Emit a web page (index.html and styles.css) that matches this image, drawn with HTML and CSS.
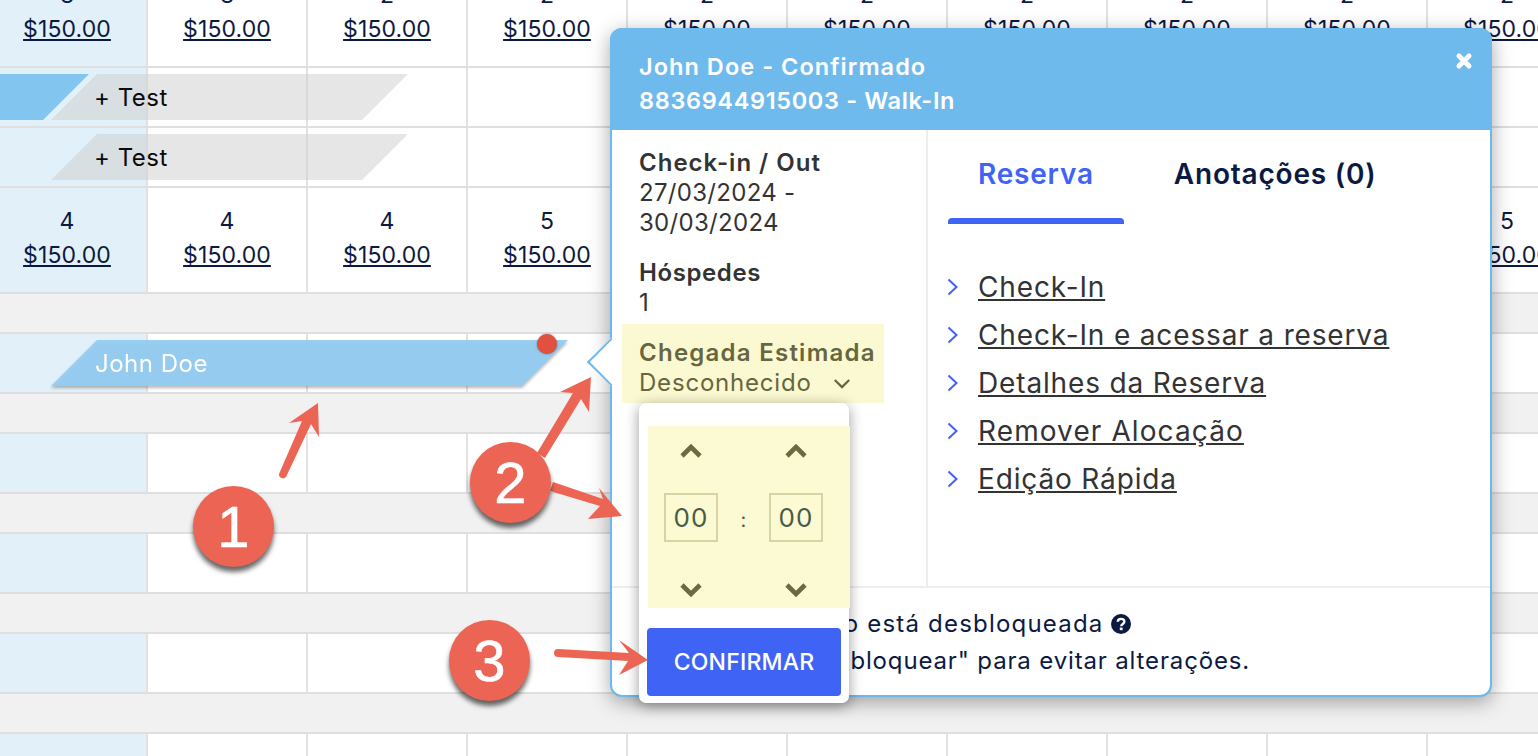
FILE: index.html
```html
<!DOCTYPE html>
<html lang="pt">
<head>
<meta charset="utf-8">
<title>Calendário de reservas</title>
<link rel="stylesheet" href="styles.css">
</head>
<body>
<main class="stage">
  <section class="grid">
    <div class="row row-price">
      <div class="cell"><span class="num">3</span><a class="price">$150.00</a></div>
      <div class="cell"><span class="num">3</span><a class="price">$150.00</a></div>
      <div class="cell"><span class="num">2</span><a class="price">$150.00</a></div>
      <div class="cell"><span class="num">2</span><a class="price">$150.00</a></div>
      <div class="cell"><span class="num">2</span><a class="price">$150.00</a></div>
      <div class="cell"><span class="num">2</span><a class="price">$150.00</a></div>
      <div class="cell"><span class="num">2</span><a class="price">$150.00</a></div>
      <div class="cell"><span class="num">2</span><a class="price">$150.00</a></div>
      <div class="cell"><span class="num">2</span><a class="price">$150.00</a></div>
      <div class="cell"><span class="num">2</span><a class="price">$150.00</a></div>
    </div>
    <div class="row row-slot">
      <div class="cell"></div><div class="cell"></div><div class="cell"></div><div class="cell"></div><div class="cell"></div><div class="cell"></div><div class="cell"></div><div class="cell"></div><div class="cell"></div><div class="cell"></div>
      <div class="bar bar-blue-stub"></div>
      <div class="bar bar-gray"><span>+ Test</span></div>
    </div>
    <div class="row row-slot">
      <div class="cell"></div><div class="cell"></div><div class="cell"></div><div class="cell"></div><div class="cell"></div><div class="cell"></div><div class="cell"></div><div class="cell"></div><div class="cell"></div><div class="cell"></div>
      <div class="bar bar-gray"><span>+ Test</span></div>
    </div>
    <div class="row row-price">
      <div class="cell"><span class="num">4</span><a class="price">$150.00</a></div>
      <div class="cell"><span class="num">4</span><a class="price">$150.00</a></div>
      <div class="cell"><span class="num">4</span><a class="price">$150.00</a></div>
      <div class="cell"><span class="num">5</span><a class="price">$150.00</a></div>
      <div class="cell"><span class="num">5</span><a class="price">$150.00</a></div>
      <div class="cell"><span class="num">5</span><a class="price">$150.00</a></div>
      <div class="cell"><span class="num">5</span><a class="price">$150.00</a></div>
      <div class="cell"><span class="num">5</span><a class="price">$150.00</a></div>
      <div class="cell"><span class="num">5</span><a class="price">$150.00</a></div>
      <div class="cell"><span class="num">5</span><a class="price">$150.00</a></div>
    </div>
    <div class="row-gap"></div>
    <div class="row row-slot">
      <div class="cell"></div><div class="cell"></div><div class="cell"></div><div class="cell"></div><div class="cell"></div><div class="cell"></div><div class="cell"></div><div class="cell"></div><div class="cell"></div><div class="cell"></div>
      <div class="bar-shadow"><div class="bar bar-guest"><span>John Doe</span></div></div>
      <span class="bar-dot"></span>
    </div>
    <div class="row-gap"></div>
    <div class="row row-slot">
      <div class="cell"></div><div class="cell"></div><div class="cell"></div><div class="cell"></div><div class="cell"></div><div class="cell"></div><div class="cell"></div><div class="cell"></div><div class="cell"></div><div class="cell"></div>
    </div>
    <div class="row-gap"></div>
    <div class="row row-slot">
      <div class="cell"></div><div class="cell"></div><div class="cell"></div><div class="cell"></div><div class="cell"></div><div class="cell"></div><div class="cell"></div><div class="cell"></div><div class="cell"></div><div class="cell"></div>
    </div>
    <div class="row-gap"></div>
    <div class="row row-slot">
      <div class="cell"></div><div class="cell"></div><div class="cell"></div><div class="cell"></div><div class="cell"></div><div class="cell"></div><div class="cell"></div><div class="cell"></div><div class="cell"></div><div class="cell"></div>
    </div>
    <div class="row-gap"></div>
    <div class="row row-slot">
      <div class="cell"></div><div class="cell"></div><div class="cell"></div><div class="cell"></div><div class="cell"></div><div class="cell"></div><div class="cell"></div><div class="cell"></div><div class="cell"></div><div class="cell"></div>
    </div>
  </section>

  <aside class="popover">
    <span class="popover-notch"></span>
    <header class="pop-head">
      <div class="pop-title">
        <div class="title-name">John Doe - Confirmado</div>
        <div class="title-code">8836944915003 - Walk-In</div>
      </div>
      <svg class="pop-close" viewBox="0 0 18 18" aria-label="Fechar"><path d="M4 4 L14 14 M14 4 L4 14" fill="none" stroke="#fff" stroke-width="5" stroke-linecap="round"/></svg>
    </header>
    <div class="pop-body">
      <div class="pop-info">
        <div class="info-label">Check-in / Out</div>
        <div class="info-value">27/03/2024 -<br>30/03/2024</div>
        <div class="info-label info-spaced">Hóspedes</div>
        <div class="info-value">1</div>
        <div class="arrival">
          <div class="info-label arrival-label">Chegada Estimada</div>
          <div class="arrival-value">
            <span>Desconhecido</span>
            <svg class="arrival-caret" viewBox="0 0 20 12"><path d="M2 2 L10 10 L18 2" fill="none" stroke="#66663f" stroke-width="2.4"/></svg>
          </div>
        </div>
      </div>
      <div class="pop-actions">
        <nav class="tabs">
          <a class="tab tab-active">Reserva</a>
          <a class="tab">Anotações (0)</a>
        </nav>
        <ul class="links">
          <li><svg class="link-chev" viewBox="0 0 11 18"><path d="M1.5 1.5 L9.5 9 L1.5 16.5" fill="none" stroke="#3f63f5" stroke-width="2"/></svg><a>Check-In</a></li>
          <li><svg class="link-chev" viewBox="0 0 11 18"><path d="M1.5 1.5 L9.5 9 L1.5 16.5" fill="none" stroke="#3f63f5" stroke-width="2"/></svg><a>Check-In e acessar a reserva</a></li>
          <li><svg class="link-chev" viewBox="0 0 11 18"><path d="M1.5 1.5 L9.5 9 L1.5 16.5" fill="none" stroke="#3f63f5" stroke-width="2"/></svg><a>Detalhes da Reserva</a></li>
          <li><svg class="link-chev" viewBox="0 0 11 18"><path d="M1.5 1.5 L9.5 9 L1.5 16.5" fill="none" stroke="#3f63f5" stroke-width="2"/></svg><a class="link-wide">Remover Alocação</a></li>
          <li><svg class="link-chev" viewBox="0 0 11 18"><path d="M1.5 1.5 L9.5 9 L1.5 16.5" fill="none" stroke="#3f63f5" stroke-width="2"/></svg><a>Edição Rápida</a></li>
        </ul>
      </div>
    </div>
    <footer class="pop-foot">
      <div class="foot-line foot-first"><span>Esta acomodação está desbloqueada</span>
        <svg class="help" viewBox="0 0 20 20"><circle cx="10" cy="10" r="10" fill="#0b1a42"/><path d="M6.8 7.8 C6.8 3.9 13.4 4 13.4 7.6 C13.4 10 10.2 9.8 10.2 12.2" fill="none" stroke="#fff" stroke-width="2.4"/><rect x="8.8" y="13.6" width="2.8" height="2.6" fill="#fff"/></svg>
      </div>
      <div class="foot-line foot-second"><span>Clique no botão "bloquear" para evitar alterações.</span></div>
    </footer>

    <div class="time-pop">
      <div class="time-picker">
        <div class="time-col">
          <svg class="time-chev" viewBox="0 0 22 14"><path d="M2 12 L11 3 L20 12" fill="none" stroke="#6b6b40" stroke-width="4.6"/></svg>
          <span class="time-box">00</span>
          <svg class="time-chev time-chev-down" viewBox="0 0 22 14"><path d="M2 2 L11 11 L20 2" fill="none" stroke="#6b6b40" stroke-width="4.6"/></svg>
        </div>
        <span class="time-sep">:</span>
        <div class="time-col">
          <svg class="time-chev" viewBox="0 0 22 14"><path d="M2 12 L11 3 L20 12" fill="none" stroke="#6b6b40" stroke-width="4.6"/></svg>
          <span class="time-box">00</span>
          <svg class="time-chev time-chev-down" viewBox="0 0 22 14"><path d="M2 2 L11 11 L20 2" fill="none" stroke="#6b6b40" stroke-width="4.6"/></svg>
        </div>
      </div>
      <button class="confirm">CONFIRMAR</button>
    </div>
  </aside>

  <svg class="arrows" viewBox="0 0 1538 756">
    <g fill="#ec6453" stroke="none">
      <path d="M318 403 L319 437 L311 424 L286 477 A4 4 0 0 1 279 474 L302 421 L289 423 Z"/>
      <path d="M591 377 L589 412 L581 399 L545 458 L537 453 L573 393 L560 392 Z"/>
      <path d="M622 516 L588 519 L600 506 L550 491 L553 482 L603 499 L599 488 Z"/>
      <path d="M648 660 L619 675 L628 661 L558 657 A4 4 0 0 1 558 649 L629 653 L619 640 Z"/>
    </g>
  </svg>
  <span class="marker marker-1">1</span>
  <span class="marker marker-2">2</span>
  <span class="marker marker-3">3</span>
</main>
</body>
</html>
```

FILE: styles.css
```css
* { box-sizing: border-box; }
html, body { margin: 0; height: 100%; overflow: hidden; background: #fff; }
body { font-family: Inter, "Noto Sans", sans-serif; color: #0b1a42; }

.stage { position: relative; width: 1538px; height: 756px; overflow: hidden; }

/* calendar grid */
.grid { display: flex; flex-direction: column; width: 1600px; margin: -38px 0 0 -12px; }
.row { position: relative; display: grid; grid-template-columns: repeat(10, 160px); }
.row-price { height: 106px; }
.row-slot { height: 60px; }
.row-gap { height: 40px; background: #f1f1f1; border-bottom: 2px solid #dfdfdf; }
.cell { display: flex; flex-direction: column; align-items: center; border-right: 2px solid #e2e2e2; border-bottom: 2px solid #dfdfdf; }
.cell:first-child { background: #e2f1f9; }
.num { margin-top: 16px; font-size: 23px; line-height: 34px; }
.price { font-size: 23px; line-height: 34px; text-decoration: underline; letter-spacing: .1px; }

.bar { position: absolute; top: 6px; height: 46px; clip-path: polygon(46px 0, 100% 0, calc(100% - 46px) 100%, 0 100%); display: flex; align-items: center; font-size: 24px; }
.bar-blue-stub { left: -34px; width: 135px; background: #82c6f0; }
.bar-gray { left: 63px; width: 357px; background: rgba(205, 205, 205, .5); color: #0a0a0a; }
.bar-gray span { padding-left: 43px; letter-spacing: .5px; }
.bar-shadow { position: absolute; left: 0; top: 0; width: 100%; height: 100%; filter: drop-shadow(0 2px 1.5px rgba(0, 0, 0, .3)); }
.bar-guest { left: 63px; width: 517px; background: rgba(146, 204, 242, .93); color: #fff; }
.bar-guest span { padding-left: 44px; letter-spacing: .5px; }
.bar-dot { position: absolute; left: 549px; top: 0; width: 20px; height: 20px; border-radius: 50%; background: #e2503f; box-shadow: 0 0 2px rgba(0, 0, 0, .5); }

/* popover */
.popover { position: absolute; left: 610px; top: 28px; width: 882px; height: 669px; display: flex; flex-direction: column; background: #fff; border: 2px solid #6db9ec; border-radius: 12px; box-shadow: 0 5px 20px rgba(0, 0, 0, .35); }
.popover-notch { position: absolute; left: -18px; top: 315px; width: 34px; height: 34px; background: #fff; border-left: 2px solid #6db9ec; border-bottom: 2px solid #6db9ec; transform: rotate(45deg); }
.pop-head { position: relative; height: 102px; margin: -2px -2px 0; padding: 22px 29px 0; background: #6fbaed; border-radius: 12px 12px 0 0; color: #fff; display: flex; justify-content: space-between; flex: none; }
.pop-title { font-size: 23.5px; font-weight: 600; line-height: 34px; }
.title-name { letter-spacing: 1.05px; }
.title-code { letter-spacing: .65px; }
.pop-close { width: 18px; height: 18px; position: relative; left: 10px; top: 2px; }
.pop-body { position: relative; display: flex; height: 456px; flex: none; }
.pop-info { width: 316px; flex: none; padding: 18px 0 0 27px; border-right: 2px solid #eee; font-size: 24px; line-height: 30px; color: #333; }
.info-label { font-weight: 600; letter-spacing: 1px; }
.info-value { letter-spacing: .3px; }
.info-spaced { margin-top: 20px; letter-spacing: .6px; }
.arrival { width: 262px; margin: 6px 0 0 -17px; padding: 14px 0 5px 17px; background: #fbf9d2; color: #66663f; white-space: nowrap; }
.arrival-label { letter-spacing: 1.25px; }
.arrival-value { display: flex; align-items: center; letter-spacing: .8px; }
.arrival-caret { width: 18px; height: 11px; margin-left: 21px; }

.pop-actions { flex: 1; padding-left: 20px; }
.tabs { display: flex; height: 94px; }
.tab { height: 94px; padding: 26px 30px 0; font-size: 28px; font-weight: 600; line-height: 36px; letter-spacing: .8px; color: #0b1a42; white-space: nowrap; }
.tab + .tab { padding-left: 50px; }
.tab-active { color: #3f63f5; position: relative; }
.tab-active::after { content: ""; position: absolute; left: 0; right: 0; bottom: 0; height: 6px; background: #3f63f5; border-radius: 4px 4px 0 0; }
.links { list-style: none; margin: 39px 0 0; padding: 0; }
.links li { display: flex; align-items: center; height: 48px; font-size: 28px; color: #333; }
.links a { text-decoration: underline; letter-spacing: .85px; }
.links .link-wide { letter-spacing: 1.1px; }
.link-chev { width: 11px; height: 18px; margin: 0 20px 0 -1px; flex: none; }

.pop-foot { flex: 1; padding: 17px 0 0 27px; border-top: 2px solid #eee; font-size: 24px; line-height: 37px; }
.foot-line { display: flex; align-items: center; gap: 7px; white-space: nowrap; letter-spacing: 1.2px; height: 37px; }
.foot-second { letter-spacing: .85px; }
.help { width: 20px; height: 20px; flex: none; }

/* time picker */
.time-pop { position: absolute; left: 27px; top: 373px; width: 210px; height: 300px; padding: 23px 0 0 9px; background: #fff; border-radius: 7px; box-shadow: 0 3px 14px rgba(0, 0, 0, .4); }
.time-picker { display: grid; grid-template-columns: 54px 51px 54px; align-items: start; width: 202px; height: 182px; padding: 18px 0 0 16px; background: #fbfad3; }
.time-col { display: flex; flex-direction: column; align-items: center; }
.time-chev { width: 22px; height: 14px; }
.time-chev-down { margin-top: 41px; }
.time-box { width: 54px; height: 49px; margin-top: 35px; display: flex; align-items: center; justify-content: center; border: 2px solid #d4d4a4; font-size: 26px; color: #4b5a45; letter-spacing: 1px; }
.time-sep { margin-top: 62px; font-size: 20px; line-height: 28px; color: #555; text-align: center; }
.confirm { display: block; width: 194px; height: 68px; margin: 20px 0 0 -1px; border: 0; border-radius: 4px; background: #3f63f5; color: #fff; font-family: inherit; font-size: 23px; font-weight: 500; letter-spacing: .2px; }

/* annotations */
.arrows { position: absolute; left: 0; top: 0; width: 1538px; height: 756px; pointer-events: none; }
.marker { position: absolute; width: 81px; height: 81px; display: flex; align-items: center; justify-content: center; border-radius: 50%; background: #ec6453; color: #fff; font-family: "Liberation Sans", sans-serif; font-size: 58px; -webkit-text-stroke: .6px #fff; box-shadow: 0 5px 5px rgba(0, 0, 0, .6); }
.marker-1 { left: 193px; top: 486px; }
.marker-2 { left: 470px; top: 442px; }
.marker-3 { left: 449px; top: 620px; }
```
